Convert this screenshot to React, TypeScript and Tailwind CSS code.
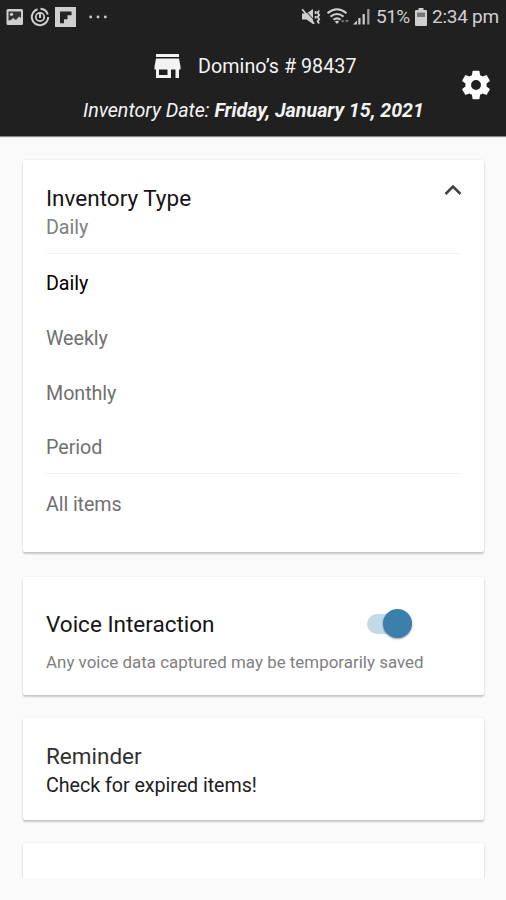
import type { ReactNode } from "react";

function Card({ className, children }: { className: string; children?: ReactNode }) {
  return (
    <section
      className={`rounded-[2px] bg-white px-[23px] shadow-[0_2px_2px_rgba(0,0,0,0.2),0_0_2px_rgba(0,0,0,0.1)] ${className}`}
    >
      {children}
    </section>
  );
}

function StatusIcons() {
  return (
    <div className="flex items-center">
      <svg width="18" height="18" viewBox="0 0 18 18" fill="none">
        <rect x="0.5" y="1" width="16.5" height="16" rx="1.5" fill="#cfcfcf" />
        <path d="M2.5 3.5H15V10l-2-1.500-3 3.500-3-2-2 2-2.500.5z" fill="#333" />
        <circle cx="5.5" cy="6.3" r="1.6" fill="#cfcfcf" />
      </svg>
      <svg className="ml-[6px]" width="20" height="20" viewBox="0 0 20 20" fill="none" stroke="#cfcfcf">
        <path d="M7.500 2.200A8.200 8.200 0 1 0 18.200 10M17.800 7.500A8.200 8.200 0 0 0 10.500 1.800" strokeWidth="2" />
        <circle cx="10" cy="10" r="4.200" strokeWidth="1.800" />
        <path d="M10 5v6" strokeWidth="2" />
      </svg>
      <svg className="ml-[5px]" width="21" height="20" viewBox="0 0 21 20">
        <path d="M0 0h21v20H0z" fill="#cfcfcf" />
        <path d="M5 4.5h11.5v3.8h-4v4H9v4H5z" fill="#242424" />
      </svg>
      <svg className="ml-[13px]" width="18" height="4" viewBox="0 0 18 4" fill="#cfcfcf">
        <circle cx="1.7" cy="2" r="1.4" />
        <circle cx="9" cy="2" r="1.4" />
        <circle cx="16.3" cy="2" r="1.4" />
      </svg>
    </div>
  );
}

function SystemIcons() {
  return (
    <div className="flex items-center text-[19px] leading-[24px] text-[#d0d0d0]">
      <svg width="20" height="18" viewBox="0 0 20 18" fill="none" stroke="#cfcfcf">
        <path d="M1 5.500h4.500L12 1v15l-6.500-4.500H1z" fill="#cfcfcf" stroke="none" />
        <path d="M3.500 1.500l10 11" stroke="#202020" strokeWidth="1" />
        <path d="M1.200 1.200l12 14.500" strokeWidth="1.800" />
        <path d="M14.600 3v3M14.600 8v2.500M18.200 2.500l-1.600 2.200 1.600 2.200-1.600 2.200 1.600 2.200-1.600 2.200 1.600 2" strokeWidth="1.800" />
      </svg>
      <svg className="ml-[6px]" width="23" height="18" viewBox="0 0 23 18" fill="none" stroke="#cfcfcf" strokeWidth="2">
        <path d="M.5 5.2q9.500-7.800 19 0M3.500 8.600q6.500-5.200 13 0M6.400 11.800q3.600-2.900 7.200 0" />
        <path d="M7.800 13.500q2.200-1.400 4.400 0l-2.200 2.500z" fill="#cfcfcf" stroke="none" />
        <path d="M13.800 14l2-2.500 2 2.500zM18 12h4l-2 2.700z" fill="#777" stroke="none" />
      </svg>
      <svg className="ml-[3px]" width="18" height="18" viewBox="0 0 18 18">
        <path d="M0 16.5h4v-4zM5.3 16.5V10h2.2v6.5zM9.6 16.5V6h2.2v10.5z" fill="#cfcfcf" />
        <path d="M14.2 16.5V1h2.2v15.5z" fill="#a0a0a0" />
      </svg>
      <span className="ml-[5px] w-[33px] whitespace-nowrap tracking-[-0.55px]">51%</span>
      <svg className="ml-[6px]" width="12" height="18" viewBox="0 0 12 18">
        <path d="M3.5 0h5v2H11q1 0 1 1v14q0 1-1 1H1q-1 0-1-1V3q0-1 1-1h2.500z" fill="#cfcfcf" />
        <path d="M2 4.500h8V9H2z" fill="#777" />
      </svg>
      <span className="ml-[5px] w-[67px] whitespace-nowrap tracking-[-0.25px]">2:34 pm</span>
    </div>
  );
}

function Option({ label, selected = false }: { label: string; selected?: boolean }) {
  return (
    <li
      className={`h-[54.8px] text-[19.7px] leading-[24px] tracking-[-0.05px] ${
        selected ? "text-black" : "text-[#707070]"
      }`}
    >
      {label}
    </li>
  );
}

export default function App() {
  return (
    <div className="h-[900px] w-[506px] overflow-hidden bg-[#fafafa] font-[Roboto,sans-serif]">
      <header className="h-[136px] bg-[#202020] text-[#f3f3f3] shadow-[0_1px_1px_#888]">
        <div className="flex h-[34px] items-center justify-between pl-[6px] pr-[7px]">
          <StatusIcons />
          <SystemIcons />
        </div>
        <div className="flex">
          <div className="w-[448px] shrink-0">
            <div className="flex h-[64px] items-center pl-[154px]">
              <svg className="-mt-[1px]" width="27" height="24" viewBox="0 0 27 24" fill="#f3f3f3">
                <path d="M2 0h23v3H2zM2 4.500h23l1.500 8v3H25V24h-3.500v-8.500H17V24H2v-8.500H.5v-3zM5 15.500V21h8.500v-5.500z" />
              </svg>
              <h1 className="ml-[17px] mt-[2px] whitespace-nowrap text-[19.7px] leading-[24px] tracking-[0.05px]">
                Domino’s # 98437
              </h1>
            </div>
            <p className="mt-[1px] whitespace-nowrap pl-[83px] text-[19.7px] italic leading-[24px] tracking-[-0.03px]">
              Inventory Date: <strong>Friday, January 15, 2021</strong>
            </p>
          </div>
          <button aria-label="Settings" className="mt-[34px] ml-[11px] h-[34px] w-[34px]">
            <svg width="34" height="34" viewBox="0 0 24 24" fill="white">
              <path d="M19.430 12.980c.04-.32.07-.64.07-.98s-.03-.66-.07-.98l2.110-1.650c.19-.15.24-.42.12-.64l-2-3.460c-.12-.22-.39-.3-.61-.22l-2.490 1c-.52-.4-1.080-.73-1.690-.98l-.38-2.650C14.460 2.180 14.250 2 14 2h-4c-.25 0-.46.18-.49.42l-.38 2.650c-.61.25-1.170.59-1.690.98l-2.490-1c-.23-.09-.49 0-.61.22l-2 3.460c-.13.22-.07.49.12.64l2.110 1.650c-.04.32-.07.65-.07.98s.03.66.07.98l-2.110 1.650c-.19.15-.24.42-.12.64l2 3.460c.12.22.39.3.61.22l2.490-1c.52.4 1.080.73 1.690.98l.38 2.650c.03.24.24.42.49.42h4c.25 0 .46-.18.49-.42l.38-2.650c.61-.25 1.170-.59 1.690-.98l2.490 1c.23.09.49 0 .61-.22l2-3.460c.12-.22.07-.49-.12-.64zM12 15.500a3.500 3.500 0 1 1 0-7 3.500 3.500 0 0 1 0 7z" />
            </svg>
          </button>
        </div>
      </header>

      <main className="flex h-[742px] flex-col overflow-hidden pl-[23px] pr-[22px] pt-[24px]">
        <Card className="h-[392px] shrink-0 pt-[24px]">
          <div className="flex h-[69px] justify-between">
            <div>
              <h2 className="text-[22.5px] leading-[28px] text-[#151515]">Inventory Type</h2>
              <p className="mt-[4px] text-[19.7px] leading-[24px] tracking-[-0.05px] text-[#808080]">Daily</p>
            </div>
            <svg className="-mr-[1px]" width="18" height="12" viewBox="0 0 18 12" fill="none" stroke="#424242" strokeWidth="2.5">
              <path d="M1.500 10L9 2.500l7.500 7.500" />
            </svg>
          </div>
          <ul className="h-[221px] border-y border-[#f3f3f3] pt-[18px]">
            <Option label="Daily" selected />
            <Option label="Weekly" />
            <Option label="Monthly" />
            <Option label="Period" />
          </ul>
          <p className="mt-[19px] text-[19.7px] leading-[24px] tracking-[-0.1px] text-[#707070]">All items</p>
        </Card>

        <Card className="mt-[25px] h-[118px] shrink-0 pt-[31px]">
          <div className="flex h-[32px] items-center justify-between pr-[49px]">
            <h2 className="text-[22.5px] leading-[28px] text-[#151515]">Voice Interaction</h2>
            <div className="flex h-[20px] w-[45px] items-center justify-end rounded-full bg-[#c2d9e8]">
              <span className="-mt-[1px] h-[29px] w-[29px] shrink-0 rounded-full bg-[#3b7fad] shadow-[0_1px_2px_rgba(0,0,0,0.4)]" />
            </div>
          </div>
          <p className="mt-[11px] whitespace-nowrap text-[16.9px] leading-[22px] tracking-[0.02px] text-[#808080]">
            Any voice data captured may be temporarily saved
          </p>
        </Card>

        <Card className="mt-[23px] h-[102px] shrink-0 pt-[24px]">
          <h2 className="text-[22.5px] leading-[28px] text-[#303030]">Reminder</h2>
          <p className="mt-[4px] text-[19.7px] leading-[24px] tracking-[-0.05px] text-[#202020]">
            Check for expired items!
          </p>
        </Card>

        <Card className="mt-[23px] h-[60px] shrink-0" />
      </main>
    </div>
  );
}
